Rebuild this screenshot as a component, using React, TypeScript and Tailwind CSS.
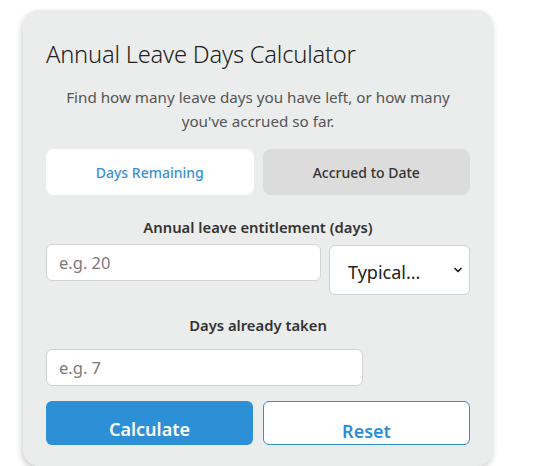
import { ChevronDown } from "lucide-react"

export default function App() {
    return (
        <div className="min-h-[466px] bg-white pl-[23px] pt-[10px] overflow-hidden" style={{ fontFamily: '"Noto Sans", "Open Sans", sans-serif' }}>
            <div className="w-[470px] h-[456px] rounded-2xl bg-[#ebecec] px-[23px] pt-[28px] shadow-[-1px_3px_6px_rgba(0,0,0,0.2)]">
                <h1 className="text-[23.7px] font-light text-[#222] leading-8 tracking-[-0.2px]">Annual Leave Days Calculator</h1>
                <p className="mt-[15px] text-center text-[15.2px] leading-6 text-[#555]">
                    Find how many leave days you have left, or how many you've accrued so far.
                </p>

                <div className="mt-[16px] grid grid-cols-2 gap-[9px]">
                    <button className="h-[46px] rounded-lg bg-white text-[14px] font-medium text-[#3a8fd8]">Days Remaining</button>
                    <button className="h-[46px] rounded-lg bg-[#dcdcdc] text-[14px] font-medium text-[#333]">Accrued to Date</button>
                </div>

                <label className="mt-[21px] block text-center text-[14.8px] font-semibold text-[#333]">Annual leave entitlement (days)</label>
                <div className="mt-[6px] flex items-start gap-[8px]">
                    <input
                        placeholder="e.g. 20"
                        className="h-[37px] w-[275px] rounded-md border border-[#d2d2d2] bg-white px-3 text-[16.5px] text-[#333] placeholder:text-[#7a7a7a] outline-none"
                    />
                    <div className="relative mt-[1px] flex-1">
                        <select className="h-[50px] w-full appearance-none rounded-md border border-[#d2d2d2] bg-white pl-[18px] pt-[4px] text-[18px] text-[#222] outline-none">
                            <option>Typical...</option>
                        </select>
                        <ChevronDown className="pointer-events-none absolute right-[6px] top-[19px] h-[12px] w-[12px] text-[#222]" strokeWidth={3.5} />
                    </div>
                </div>

                <label className="mt-[19px] block text-center text-[14.8px] font-semibold text-[#333]">Days already taken</label>
                <input
                    placeholder="e.g. 7"
                    className="mt-[13px] block h-[37px] w-[317px] rounded-md border border-[#d2d2d2] bg-white px-3 text-[16.5px] text-[#333] placeholder:text-[#7a7a7a] outline-none"
                />

                <div className="mt-[15px] grid grid-cols-2 gap-[10px]">
                    <button className="h-[44px] rounded-md bg-[#2d8fd5] pt-[13px] text-[18px] font-semibold text-white">Calculate</button>
                    <button className="h-[44px] rounded-md border border-[#2d8fd5] bg-white pt-[16px] text-[18px] font-semibold text-[#2d8fd5]">Reset</button>
                </div>
            </div>
        </div>
    )
}
